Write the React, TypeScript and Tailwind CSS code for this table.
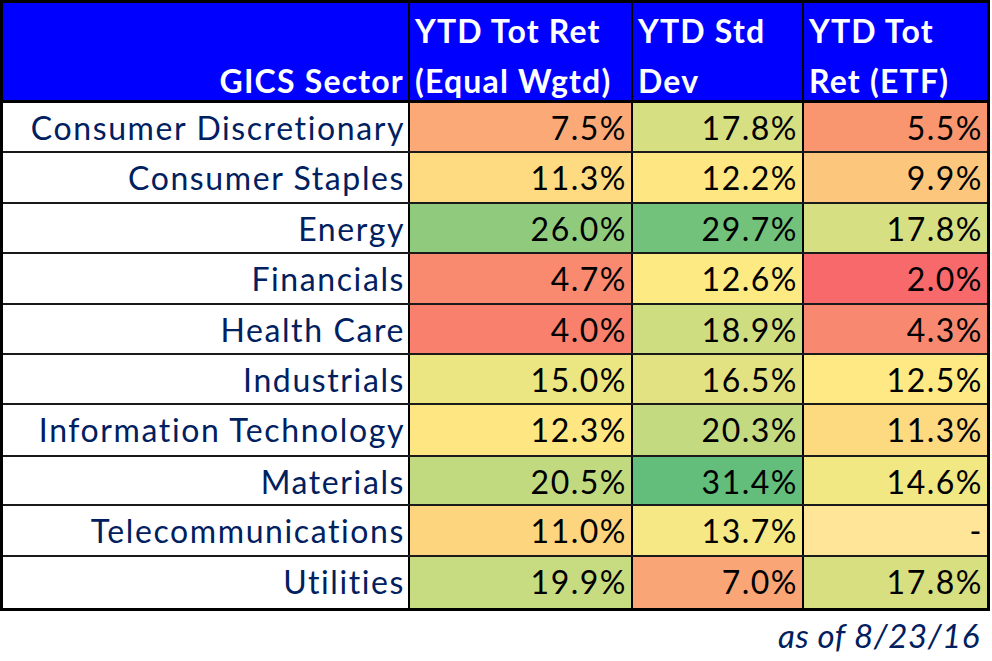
const rows = [
  { name: "Consumer Discretionary", h: "h-[50px]", v: ["7.5%", "17.8%", "5.5%"], c: ["bg-[#fbaa77]", "bg-[#d6df81]", "bg-[#f9966f]"] },
  { name: "Consumer Staples", h: "h-[51px]", v: ["11.3%", "12.2%", "9.9%"], c: ["bg-[#fedb80]", "bg-[#fee683]", "bg-[#fcc77c]"] },
  { name: "Energy", h: "h-[50px]", v: ["26.0%", "29.7%", "17.8%"], c: ["bg-[#90cb7d]", "bg-[#72c27b]", "bg-[#d6df81]"] },
  { name: "Financials", h: "h-[51px]", v: ["4.7%", "12.6%", "2.0%"], c: ["bg-[#f98a6f]", "bg-[#feea83]", "bg-[#f8696b]"] },
  { name: "Health Care", h: "h-[50px]", v: ["4.0%", "18.9%", "4.3%"], c: ["bg-[#f8806d]", "bg-[#cfdd81]", "bg-[#f98870]"] },
  { name: "Industrials", h: "h-[50px]", v: ["15.0%", "16.5%", "12.5%"], c: ["bg-[#ebe582]", "bg-[#e3e282]", "bg-[#fee984]"] },
  { name: "Information Technology", h: "h-[52px]", v: ["12.3%", "20.3%", "11.3%"], c: ["bg-[#fee783]", "bg-[#c4da80]", "bg-[#fdd980]"] },
  { name: "Materials", h: "h-[49px]", v: ["20.5%", "31.4%", "14.6%"], c: ["bg-[#c2da7f]", "bg-[#63be7b]", "bg-[#f1e783]"] },
  { name: "Telecommunications", h: "h-[51px]", v: ["11.0%", "13.7%", "-"], c: ["bg-[#fdd57f]", "bg-[#f6e884]", "bg-[#fee598]"] },
  { name: "Utilities", h: "h-[51px]", v: ["19.9%", "7.0%", "17.8%"], c: ["bg-[#c7db80]", "bg-[#f9a575]", "bg-[#d7df81]"] },
];

export default function App() {
  return (
    <div className="w-[992px] h-[661px] bg-white font-['Lato','Open_Sans',sans-serif]">
      <div className="w-[990px] border-[3px] border-black">
        {/* Header */}
        <div className="grid grid-cols-[407px_223px_171px_183px] h-[100px] bg-[#0000ff] border-b-[3px] border-black text-white font-bold text-[32px] leading-[50px] tracking-[1.2px] whitespace-nowrap">
          <div className="border-r-2 border-black text-right pr-[4px] pt-[53px]">GICS Sector</div>
          <div className="border-r-2 border-black flex flex-col pl-[5px] pt-[3px]">
            <span>YTD Tot Ret</span>
            <span>(Equal Wgtd)</span>
          </div>
          <div className="border-r-2 border-black flex flex-col pl-[5px] pt-[3px]">
            <span>YTD Std</span>
            <span>Dev</span>
          </div>
          <div className="flex flex-col pl-[5px] pt-[3px]">
            <span>YTD Tot</span>
            <span>Ret (ETF)</span>
          </div>
        </div>

        {/* Rows */}
        {rows.map((r, i) => (
          <div
            key={r.name}
            className={
              "grid grid-cols-[407px_223px_171px_183px] text-[32px] leading-[45px] whitespace-nowrap " +
              r.h +
              (i < rows.length - 1 ? " border-b-2 border-[#1a1a1a]" : "")
            }
          >
            <div className="border-r-2 border-black text-right pt-[2px] pr-[3px] text-[#002060] bg-white tracking-[1.6px]">
              {r.name}
            </div>
            <div className={"border-r-2 border-black text-right pt-[2px] pr-[4px] tracking-[1.5px] text-black " + r.c[0]}>{r.v[0]}</div>
            <div className={"border-r-2 border-black text-right pt-[2px] pr-[4px] tracking-[1.5px] text-black " + r.c[1]}>{r.v[1]}</div>
            <div className={"text-right pt-[2px] pr-[4px] tracking-[1.5px] text-black " + r.c[2]}>{r.v[2]}</div>
          </div>
        ))}
      </div>
      <div className="w-[990px] text-right pr-[10px] italic text-[33px] tracking-[0.6px] text-[#002060]">
        as of 8/23/16
      </div>
    </div>
  );
}
